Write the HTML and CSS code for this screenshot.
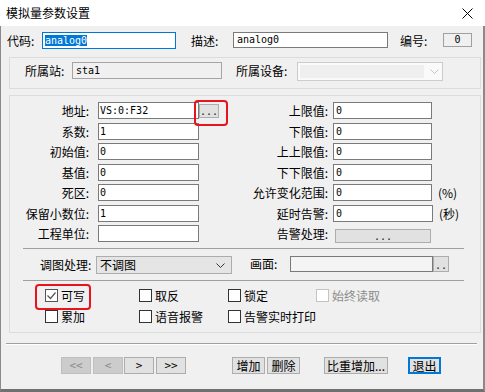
FILE: index.html
```html
<!DOCTYPE html>
<html lang="zh-CN">
<head>
    <meta charset="UTF-8">
    <title>模拟量参数设置</title>
    <link rel="stylesheet" href="styles.css">
</head>
<body>
<div class="window">
    <div class="titlebar">
        <span class="title">模拟量参数设置</span>
        <svg class="close" width="11" height="11" viewBox="0 0 11 11">
            <path d="M0.5 0.5 L10.5 10.5 M10.5 0.5 L0.5 10.5" stroke="#000" stroke-width="1" fill="none"/>
        </svg>
    </div>

    <div class="content">
        <!-- code / description / number -->
        <div class="top-row">
            <span class="lbl lbl-code">代码:</span>
            <div class="field field-code"><span class="sel">analog0</span></div>
            <span class="lbl lbl-desc">描述:</span>
            <div class="field field-desc">analog0</div>
            <span class="lbl lbl-num">编号:</span>
            <div class="numbox">0</div>
        </div>

        <div class="group group-station">
            <span class="lbl lbl-sta">所属站:</span>
            <div class="field field-ro field-sta">sta1</div>
            <span class="lbl lbl-dev">所属设备:</span>
            <div class="combo combo-off">
                <span class="combo-edit"></span>
                <svg class="chev" width="9" height="5" viewBox="0 0 9 5"><path d="M0.5 0.5 L4.5 4.5 L8.5 0.5" stroke="#c4c4c4" fill="none"/></svg>
            </div>
        </div>

        <div class="group group-main">
            <div class="form">
                <div class="col col-left">
                    <div class="frow"><span class="flbl">地址:</span><div class="field">VS:0:F32</div><span class="mark mark-dots"><button class="btn btn-dots">...</button></span></div>
                    <div class="frow"><span class="flbl">系数:</span><div class="field">1</div></div>
                    <div class="frow"><span class="flbl">初始值:</span><div class="field">0</div></div>
                    <div class="frow"><span class="flbl">基值:</span><div class="field">0</div></div>
                    <div class="frow"><span class="flbl">死区:</span><div class="field">0</div></div>
                    <div class="frow"><span class="flbl">保留小数位:</span><div class="field">1</div></div>
                    <div class="frow"><span class="flbl">工程单位:</span><div class="field"></div></div>
                </div>
                <div class="col col-right">
                    <div class="frow"><span class="flbl">上限值:</span><div class="field">0</div></div>
                    <div class="frow"><span class="flbl">下限值:</span><div class="field">0</div></div>
                    <div class="frow"><span class="flbl">上上限值:</span><div class="field">0</div></div>
                    <div class="frow"><span class="flbl">下下限值:</span><div class="field">0</div></div>
                    <div class="frow"><span class="flbl">允许变化范围:</span><div class="field">0</div><span class="unit">(%)</span></div>
                    <div class="frow"><span class="flbl">延时告警:</span><div class="field field-wide">0</div><span class="unit">(秒)</span></div>
                    <div class="frow"><span class="flbl">告警处理:</span><button class="btn btn-alarm">...</button></div>
                </div>
            </div>

            <div class="sep"></div>

            <div class="pic-row">
                <span class="lbl lbl-tutu">调图处理:</span>
                <div class="combo combo-tutu">
                    <span class="combo-text">不调图</span>
                    <svg class="chev" width="9" height="5" viewBox="0 0 9 5"><path d="M0.5 0.5 L4.5 4.5 L8.5 0.5" stroke="#333" fill="none"/></svg>
                </div>
                <span class="lbl lbl-pic">画面:</span>
                <div class="field field-ro field-pic"></div>
                <button class="btn btn-pic">..</button>
            </div>

            <div class="sep sep-two"></div>

            <div class="checks">
                <label class="chk mark mark-chk"><span class="box"><svg width="11" height="11" viewBox="0 0 11 11"><path d="M1.5 5.5 L4.5 8.5 L9.5 2.5" stroke="#555" stroke-width="1.2" fill="none"/></svg></span>可写</label>
                <label class="chk"><span class="box"></span>取反</label>
                <label class="chk"><span class="box"></span>锁定</label>
                <label class="chk chk-off"><span class="box"></span>始终读取</label>
                <label class="chk"><span class="box"></span>累加</label>
                <label class="chk"><span class="box"></span>语音报警</label>
                <label class="chk"><span class="box"></span>告警实时打印</label>
            </div>
        </div>

        <div class="footer-line"></div>

        <div class="actions">
            <button class="btn nav off">&lt;&lt;</button>
            <button class="btn nav off nav-prev">&lt;</button>
            <button class="btn nav nav-next">&gt;</button>
            <button class="btn nav nav-last">&gt;&gt;</button>
            <button class="btn act act-add">增加</button>
            <button class="btn act act-del">删除</button>
            <button class="btn act act-batch">比重增加...</button>
            <button class="btn act act-exit">退出</button>
        </div>
    </div>
</div>
</body>
</html>
```

FILE: styles.css
```css
* {
    box-sizing: border-box;
}

body {
    margin: 0;
    font-family: "Noto Sans CJK SC", "Noto Sans", sans-serif;
    font-size: 12px;
    color: #000;
    background: #f0f0f0;
}

.window {
    width: 485px;
    height: 392px;
    display: flex;
    flex-direction: column;
}

/* --- title bar --- */
.titlebar {
    height: 26px;
    flex: none;
    background: #fff;
    display: flex;
    align-items: center;
    justify-content: space-between;
    padding: 0 12px 0 6px;
}

.title {
    line-height: 16px;
}

/* --- dialog body --- */
.content {
    flex: 1;
    background: #f0f0f0;
    border-left: 1px solid #8a8a8a;
    border-right: 2px solid #8a8a8a;
    border-bottom: 3px solid #707070;
}

.lbl {
    flex: none;
    line-height: 17px;
    white-space: nowrap;
}

.field {
    flex: none;
    height: 17px;
    background: #fff;
    border: 1px solid #7a7a7a;
    font-family: "DejaVu Sans Mono", "Liberation Mono", monospace;
    font-size: 10px;
    line-height: 15px;
    padding-left: 1px;
    white-space: nowrap;
    overflow: hidden;
}

.field-ro {
    background: #f0f0f0;
    border-color: #a5a5a5;
}

/* top row */
.top-row {
    display: flex;
    align-items: flex-start;
    margin-top: 6px;
    height: 17px;
}

.lbl-code { margin-left: 6px; width: 35px; }
.lbl-desc { margin-left: 15px; width: 42px; }
.lbl-num { margin-left: 12px; width: 43px; }

.field-code {
    width: 134px;
    border-color: #0078d7;
    padding-left: 2px;
    padding-top: 2px;
    line-height: 11px;
}

.sel {
    display: inline-block;
    background: #0078d7;
    color: #fff;
}

.field-desc {
    width: 155px;
    height: 16px;
    padding-left: 3px;
    line-height: 14px;
}

.numbox {
    flex: none;
    width: 29px;
    height: 14px;
    margin-top: 1px;
    border: 1px solid #a0a0a0;
    text-align: center;
    font-family: "DejaVu Sans Mono", monospace;
    font-size: 10px;
    line-height: 12px;
}

/* group boxes */
.group {
    margin-left: 8px;
    width: 472px;
    border: 1px solid #dcdcdc;
}

.group-station {
    margin-top: 8px;
    height: 32px;
    display: flex;
    align-items: flex-start;
    padding-top: 4px;
}

.lbl-sta { margin-left: 15px; width: 47px; }
.field-sta { width: 150px; padding-left: 3px; }
.lbl-dev { margin-left: 14px; width: 61px; }

.combo {
    flex: none;
    display: flex;
    align-items: center;
    border: 1px solid #adadad;
    position: relative;
}

.combo-off {
    width: 146px;
    height: 19px;
    border-color: #cccccc;
    background: #fafafa;
    padding: 2px;
}

.combo-edit {
    width: 124px;
    height: 100%;
    background: #efefef;
}

.combo-off .chev {
    margin-left: 6px;
}

.group-main {
    margin-top: 6px;
    height: 238px;
}

/* parameter form */
.form {
    display: flex;
    margin-top: 6px;
}

.col {
    display: flex;
    flex-direction: column;
    gap: 3.5px;
}

.col-left { width: 209px; }

.frow {
    display: flex;
    align-items: center;
    height: 17px;
}

.flbl {
    flex: none;
    text-align: right;
    line-height: 17px;
    white-space: nowrap;
}

.col-left .flbl { width: 79px; }
.col-left .field { margin-left: 9px; width: 101px; }

.col-right .flbl { width: 109px; }
.col-right .field { margin-left: 5px; width: 99px; padding-left: 2px; }
.col-right .field-wide { width: 100px; }

.unit {
    margin-left: 6px;
    white-space: nowrap;
}

/* buttons */
.btn {
    flex: none;
    font: inherit;
    color: #000;
    padding: 0;
    margin: 0;
    background: #e1e1e1;
    border: 1px solid #adadad;
    border-radius: 0;
    line-height: 14px;
    text-align: center;
}

.btn-dots,
.btn-alarm,
.btn-pic {
    font-family: "DejaVu Sans Mono", monospace;
    font-size: 10px;
    line-height: 16px;
    color: #222;
}

.btn-dots {
    display: block;
    width: 20px;
    height: 14px;
    line-height: 14px;
}

.btn-alarm {
    width: 96px;
    height: 14px;
    margin-left: 7px;
    align-self: flex-end;
    margin-bottom: -1px;
    line-height: 14px;
}

/* red highlight marks */
.mark {
    position: relative;
}

.mark::after {
    content: "";
    position: absolute;
    border: 2px solid #e8141b;
    border-radius: 4px;
}

.mark-dots::after {
    left: -5px;
    top: -4px;
    width: 30px;
    height: 22px;
}

.mark-chk::after {
    left: -10px;
    top: -5px;
    width: 52px;
    height: 22px;
}

/* separators */
.sep {
    margin: 6px 0 0 13px;
    width: 441px;
    border-top: 1px solid #a0a0a0;
}

.sep-two {
    margin-top: 6px;
}

.pic-row {
    display: flex;
    align-items: flex-start;
    margin-top: 7px;
    height: 18px;
}

.lbl-tutu { margin-left: 30px; width: 56px; line-height: 18px; }

.combo-tutu {
    width: 136px;
    height: 18px;
    background: #e5e5e5;
    justify-content: space-between;
    padding: 0 6px 0 3px;
}

.combo-text {
    line-height: 16px;
}

.lbl-pic { margin-left: 18px; width: 40px; line-height: 16px; }

.field-pic {
    width: 143px;
    height: 16px;
    border-color: #7a7a7a;
    background: #f4f4f4;
}

.btn-pic {
    width: 16px;
    height: 16px;
    line-height: 18px;
}

/* checkboxes */
.checks {
    display: grid;
    grid-template-columns: 94px 89px 88px auto;
    row-gap: 8px;
    margin: 8px 0 0 35px;
}

.chk {
    display: flex;
    align-items: center;
    height: 13px;
    line-height: 13px;
    white-space: nowrap;
}

.box {
    flex: none;
    width: 13px;
    height: 13px;
    border: 1px solid #333;
    background: #fff;
    margin-right: 3px;
    display: flex;
    align-items: center;
    justify-content: center;
}

.mark-chk .box {
    border-color: #555;
}

.chk-off {
    color: #8d8d8d;
}

.chk-off .box {
    border-color: #c4c4c4;
}

/* bottom */
.footer-line {
    margin: 10px 0 0 5px;
    width: 471px;
    border-top: 1px solid #a0a0a0;
    border-bottom: 1px solid #fff;
}

.actions {
    display: flex;
    margin-top: 12px;
    height: 17px;
}

.nav {
    width: 30px;
    height: 17px;
    margin-left: 60px;
    font-family: "DejaVu Sans Mono", monospace;
    font-size: 11px;
}

.nav.off {
    background: #cccccc;
    border-color: #bfbfbf;
    color: #8a8a8a;
}

.nav-prev { margin-left: 2px; }
.nav-next { margin-left: 1px; }
.nav-last { margin-left: 2px; }

.act {
    height: 17px;
    width: 33px;
}

.act-add { margin-left: 46px; }
.act-del { margin-left: 2px; }
.act-batch { margin-left: 24px; width: 64px; }

.act-exit {
    margin-left: 20px;
    border: 2px solid #0078d7;
    line-height: 13px;
}
```
